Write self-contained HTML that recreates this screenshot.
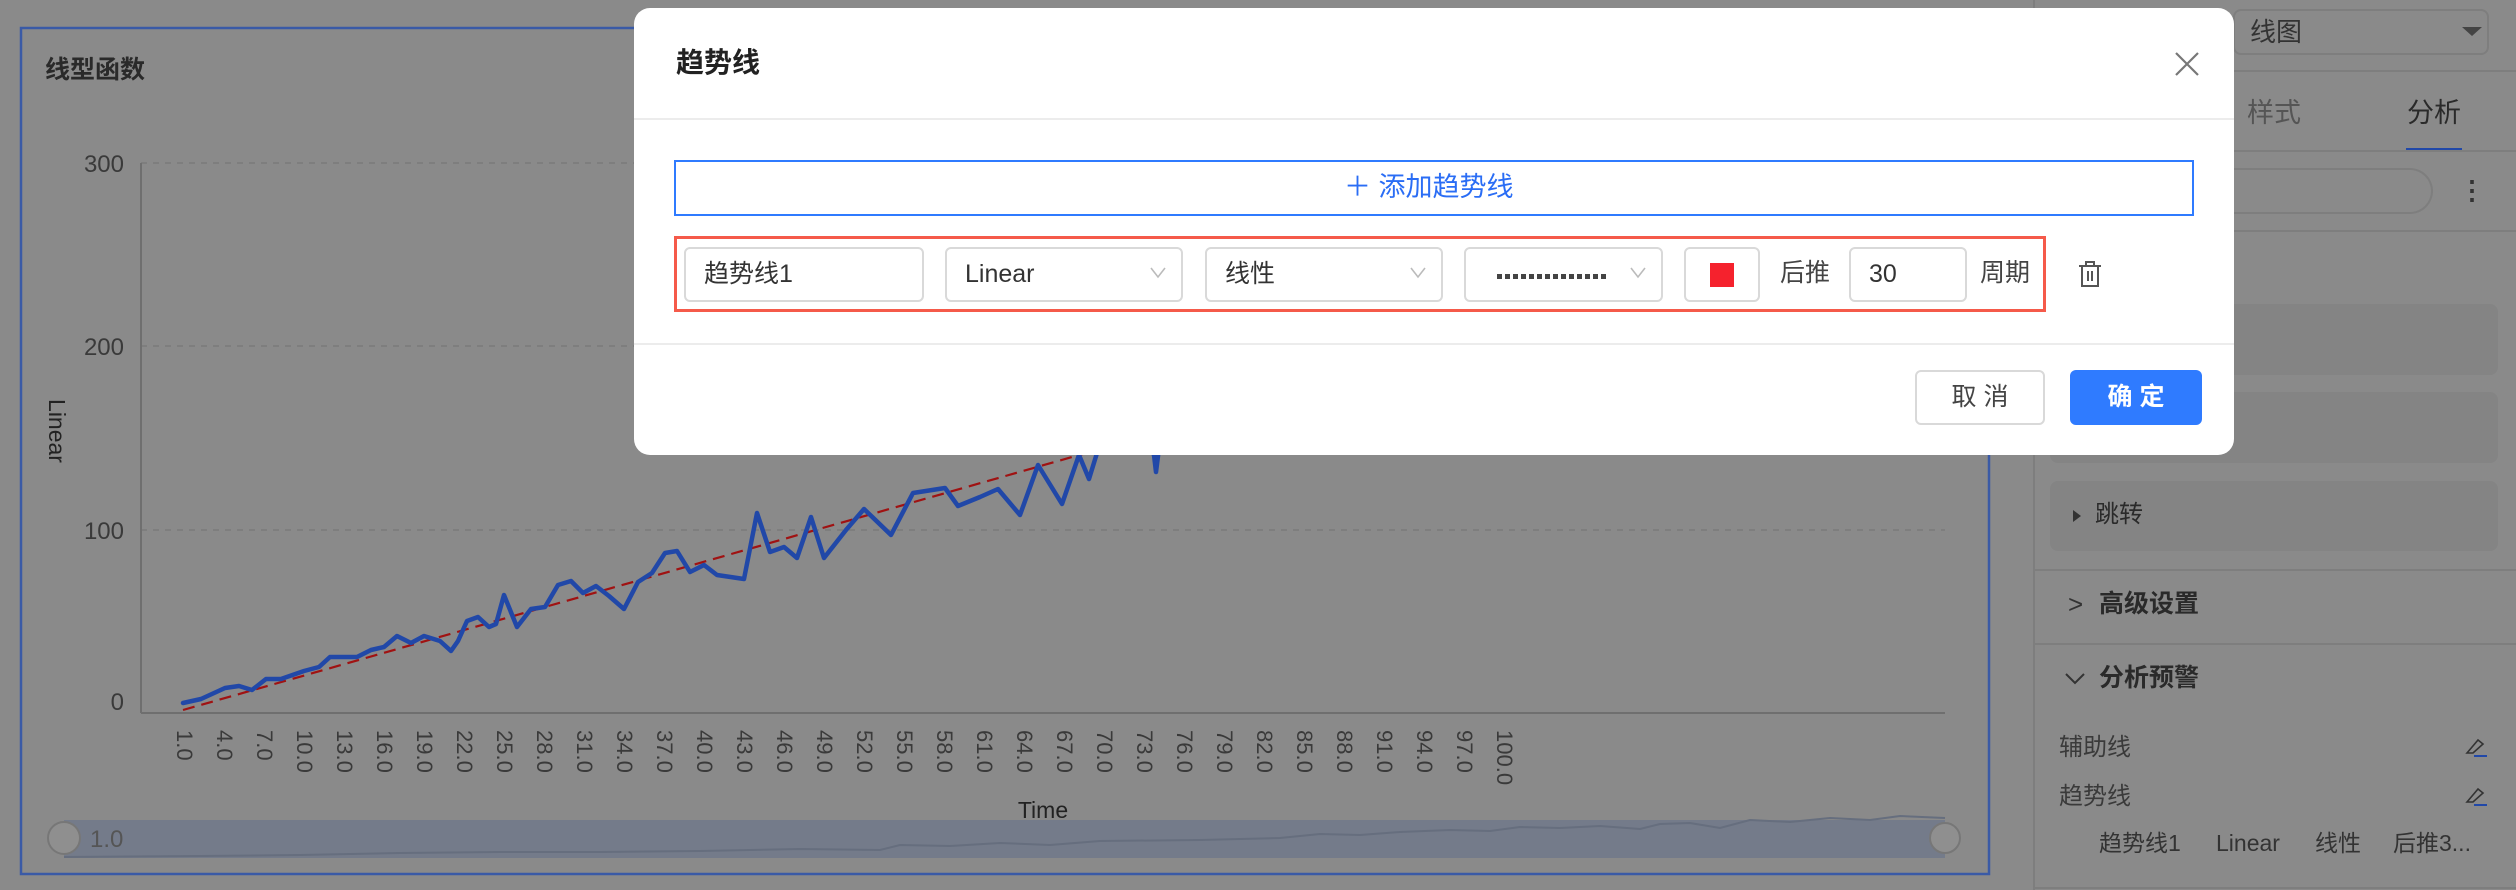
<!DOCTYPE html>
<html><head><meta charset="utf-8"><style>
*{margin:0;padding:0;box-sizing:border-box}
body{width:2516px;height:890px;overflow:hidden;background:#8a8a8a;font-family:"Liberation Sans","Noto Sans CJK SC",sans-serif;position:relative}
.a{position:absolute}
.t{position:absolute;white-space:nowrap;line-height:1}
.inp{position:absolute;top:247px;height:55px;border:2px solid #d9d9d9;border-radius:6px;background:#fff;font-size:25px;color:#333;padding-left:18px;line-height:51px}
.chev{position:absolute;right:14px;top:14px;width:18px;height:18px}
.blk{position:absolute;left:2050px;width:448px;background:#848484;border-radius:8px}
.hl{position:absolute;height:2px;background:#7e7e7e}
</style></head><body>

<!-- chart -->
<svg class="a" style="left:0;top:0" width="2516" height="890">
<rect x="21" y="28" width="1968" height="846" fill="none" stroke="#3a5aa6" stroke-width="2.5"/>
<text x="45" y="78" font-size="25" font-weight="bold" fill="#2a2a2a" font-family="Liberation Sans, Noto Sans CJK SC, sans-serif">线型函数</text>
<g stroke="#7a7a7a" stroke-width="1.5" stroke-dasharray="6,6">
<line x1="141" y1="163" x2="1945" y2="163"/><line x1="141" y1="346" x2="1945" y2="346"/><line x1="141" y1="530" x2="1945" y2="530"/>
</g>
<line x1="141" y1="163" x2="141" y2="713" stroke="#6f6f6f" stroke-width="2"/>
<line x1="141" y1="713" x2="1945" y2="713" stroke="#6f6f6f" stroke-width="2"/>
<g font-size="24" fill="#3a3a3a" text-anchor="end" font-family="Liberation Sans, sans-serif">
<text x="124" y="172">300</text><text x="124" y="355">200</text><text x="124" y="539">100</text><text x="124" y="710">0</text>
</g>
<text transform="translate(49,431) rotate(90)" font-size="23" fill="#222" text-anchor="middle" font-family="Liberation Sans, sans-serif">Linear</text>
<text x="1043" y="818" font-size="23" fill="#222" text-anchor="middle" font-family="Liberation Sans, sans-serif">Time</text>
<g font-size="22" fill="#3a3a3a" font-family="Liberation Sans, sans-serif" id="xl">
<text transform="translate(177,730) rotate(90)">1.0</text><text transform="translate(217,730) rotate(90)">4.0</text><text transform="translate(257,730) rotate(90)">7.0</text><text transform="translate(297,730) rotate(90)">10.0</text><text transform="translate(337,730) rotate(90)">13.0</text><text transform="translate(377,730) rotate(90)">16.0</text><text transform="translate(417,730) rotate(90)">19.0</text><text transform="translate(457,730) rotate(90)">22.0</text><text transform="translate(497,730) rotate(90)">25.0</text><text transform="translate(537,730) rotate(90)">28.0</text><text transform="translate(577,730) rotate(90)">31.0</text><text transform="translate(617,730) rotate(90)">34.0</text><text transform="translate(657,730) rotate(90)">37.0</text><text transform="translate(697,730) rotate(90)">40.0</text><text transform="translate(737,730) rotate(90)">43.0</text><text transform="translate(777,730) rotate(90)">46.0</text><text transform="translate(817,730) rotate(90)">49.0</text><text transform="translate(857,730) rotate(90)">52.0</text><text transform="translate(897,730) rotate(90)">55.0</text><text transform="translate(937,730) rotate(90)">58.0</text><text transform="translate(977,730) rotate(90)">61.0</text><text transform="translate(1017,730) rotate(90)">64.0</text><text transform="translate(1057,730) rotate(90)">67.0</text><text transform="translate(1097,730) rotate(90)">70.0</text><text transform="translate(1137,730) rotate(90)">73.0</text><text transform="translate(1177,730) rotate(90)">76.0</text><text transform="translate(1217,730) rotate(90)">79.0</text><text transform="translate(1257,730) rotate(90)">82.0</text><text transform="translate(1297,730) rotate(90)">85.0</text><text transform="translate(1337,730) rotate(90)">88.0</text><text transform="translate(1377,730) rotate(90)">91.0</text><text transform="translate(1417,730) rotate(90)">94.0</text><text transform="translate(1457,730) rotate(90)">97.0</text><text transform="translate(1497,730) rotate(90)">100.0</text>
</g>
<line x1="183" y1="710" x2="1160" y2="432" stroke="#a01212" stroke-width="2.2" stroke-dasharray="12,7"/>
<polyline fill="none" stroke="#2148a8" stroke-width="4.5" stroke-linejoin="round" stroke-linecap="round" points="183,703 201,699 225,688 239,686 252,690 266,679 281,679 304,671 319,667 330,657 357,657 371,650 384,647 397,636 411,643 424,636 440,641 451,651 458,641 467,621 478,617 489,627 496,624 504,595 517,627 531,609 545,607 558,585 571,581 583,593 596,586 609,596 624,609 638,582 652,573 665,553 677,551 690,572 704,565 717,575 744,579 757,513 770,552 784,547 797,558 811,517 824,558 846,530 864,509 891,535 913,493 945,488 958,506 980,497 998,489 1020,515 1038,465 1062,504 1079,455 1089,479 1101,440 1120,420 1140,430 1154,455 1156,472 1160,440"/>
<rect x="64" y="820" width="1881" height="38" fill="#747b8a"/>
<polyline fill="none" stroke="#666e7e" stroke-width="2" points="64,857 200,856 300,855 400,853 500,852 600,852 700,851 800,849 880,850 900,845 950,846 1000,843 1050,845 1100,841 1200,840 1280,838 1320,834 1360,835 1400,832 1450,830 1490,831 1520,827 1560,828 1600,826 1640,829 1660,824 1690,823 1720,828 1750,820 1790,822 1830,818 1870,820 1900,816 1945,818"/>
<circle cx="64" cy="838" r="16" fill="#8f8f8f" stroke="#777" stroke-width="2"/>
<circle cx="1945" cy="838" r="15" fill="#8f8f8f" stroke="#777" stroke-width="2"/>
<text x="90" y="847" font-size="24" fill="#555" font-family="Liberation Sans, sans-serif">1.0</text>
</svg>

<!-- right panel -->
<div class="a" style="left:2033px;top:0;width:2px;height:890px;background:#7e7e7e"></div>
<div class="a" style="left:2233px;top:9px;width:256px;height:46px;border:2px solid #7e7e7e;border-radius:8px"></div>
<div class="t" style="left:2250px;top:19px;font-size:26px;color:#333">线图</div>
<div class="a" style="left:2462px;top:27px;width:0;height:0;border-left:10px solid transparent;border-right:10px solid transparent;border-top:9px solid #444"></div>
<div class="hl" style="left:2035px;top:70px;width:481px"></div>
<div class="t" style="left:2247px;top:100px;font-size:27px;color:#555">样式</div>
<div class="t" style="left:2407px;top:100px;font-size:27px;color:#2a2a2a">分析</div>
<div class="a" style="left:2406px;top:148px;width:56px;height:3px;background:#2148a8"></div>
<div class="hl" style="left:2035px;top:150px;width:481px"></div>
<div class="a" style="left:2150px;top:168px;width:283px;height:46px;border:2px solid #7e7e7e;border-left:none;border-radius:0 23px 23px 0"></div>
<div class="t" style="left:2459px;top:177px;font-size:26px;color:#333;font-weight:bold">⋮</div>
<div class="hl" style="left:2035px;top:230px;width:481px"></div>
<div class="blk" style="top:304px;height:71px"></div>
<div class="blk" style="top:392px;height:71px"></div>
<div class="blk" style="top:481px;height:70px"></div>
<div class="a" style="left:2073px;top:510px;width:0;height:0;border-top:6px solid transparent;border-bottom:6px solid transparent;border-left:8px solid #333"></div>
<div class="t" style="left:2095px;top:503px;font-size:24px;color:#2a2a2a">跳转</div>
<div class="hl" style="left:2035px;top:569px;width:481px"></div>
<div class="t" style="left:2068px;top:591px;font-size:26px;color:#333">&gt;</div>
<div class="t" style="left:2099px;top:592px;font-size:25px;color:#2a2a2a;font-weight:bold">高级设置</div>
<div class="hl" style="left:2035px;top:643px;width:481px"></div>
<svg class="a" style="left:2064px;top:672px" width="22" height="14"><polyline points="2,2 11,11 20,2" fill="none" stroke="#333" stroke-width="2"/></svg>
<div class="t" style="left:2099px;top:666px;font-size:25px;color:#2a2a2a;font-weight:bold">分析预警</div>
<div class="t" style="left:2059px;top:736px;font-size:24px;color:#3a3a3a">辅助线</div>
<div class="t" style="left:2059px;top:785px;font-size:24px;color:#3a3a3a">趋势线</div>
<svg class="a" style="left:2464px;top:735px" width="24" height="24"><path d="M3 18 L14 5 L19 9 L9 18 Z" fill="none" stroke="#333" stroke-width="1.6"/><line x1="10" y1="21" x2="23" y2="21" stroke="#2148a8" stroke-width="2"/></svg>
<svg class="a" style="left:2464px;top:784px" width="24" height="24"><path d="M3 18 L14 5 L19 9 L9 18 Z" fill="none" stroke="#333" stroke-width="1.6"/><line x1="10" y1="21" x2="23" y2="21" stroke="#2148a8" stroke-width="2"/></svg>
<div class="t" style="left:2099px;top:832px;font-size:23px;color:#333">趋势线1</div>
<div class="t" style="left:2216px;top:832px;font-size:23px;color:#333">Linear</div>
<div class="t" style="left:2315px;top:832px;font-size:23px;color:#333">线性</div>
<div class="t" style="left:2393px;top:832px;font-size:23px;color:#333">后推3...</div>
<div class="hl" style="left:2035px;top:887px;width:481px"></div>

<!-- modal -->
<div class="a" style="left:634px;top:8px;width:1600px;height:447px;background:#fff;border-radius:16px">
</div>
<div class="t" style="left:676px;top:49px;font-size:28px;font-weight:bold;color:#222">趋势线</div>
<svg class="a" style="left:2174px;top:52px" width="26" height="24"><path d="M2 1 L24 23 M24 1 L2 23" stroke="#777" stroke-width="2.2"/></svg>
<div class="a" style="left:634px;top:118px;width:1600px;height:2px;background:#ececec"></div>
<div class="a" style="left:674px;top:160px;width:1520px;height:56px;border:2px solid #2f7bff"></div>
<div class="t" style="left:1344px;top:174px;font-size:27px;color:#2a6df5">＋ 添加趋势线</div>
<div class="a" style="left:674px;top:236px;width:1372px;height:76px;border:3px solid #f55a4a"></div>
<div class="inp" style="left:684px;width:240px">趋势线1</div>
<div class="inp" style="left:945px;width:238px">Linear<svg class="chev" viewBox="0 0 18 18"><polyline points="2,5 9,14 16,5" fill="none" stroke="#bbb" stroke-width="1.6"/></svg></div>
<div class="inp" style="left:1205px;width:238px">线性<svg class="chev" viewBox="0 0 18 18"><polyline points="2,5 9,14 16,5" fill="none" stroke="#bbb" stroke-width="1.6"/></svg></div>
<div class="inp" style="left:1464px;width:199px"><div class="a" style="left:31px;top:25px;width:111px;height:5px;background:repeating-linear-gradient(90deg,#444 0 5px,transparent 5px 8px)"></div><svg class="chev" viewBox="0 0 18 18"><polyline points="2,5 9,14 16,5" fill="none" stroke="#bbb" stroke-width="1.6"/></svg></div>
<div class="inp" style="left:1684px;width:76px;padding:0"><div class="a" style="left:24px;top:14px;width:24px;height:24px;background:#f5222d"></div></div>
<div class="t" style="left:1780px;top:261px;font-size:25px;color:#444">后推</div>
<div class="inp" style="left:1849px;width:118px">30</div>
<div class="t" style="left:1980px;top:261px;font-size:25px;color:#444">周期</div>
<svg class="a" style="left:2077px;top:259px" width="26" height="30"><path d="M2 7 H24 M9 7 V3 H17 V7 M5 7 V27 H21 V7 M11 12 V22 M15 12 V22" fill="none" stroke="#555" stroke-width="2"/></svg>
<div class="a" style="left:634px;top:343px;width:1600px;height:2px;background:#ececec"></div>
<div class="a" style="left:1915px;top:370px;width:130px;height:55px;border:2px solid #d9d9d9;border-radius:6px;font-size:25px;color:#444;text-align:center;line-height:51px">取 消</div>
<div class="a" style="left:2070px;top:370px;width:132px;height:55px;background:#2f7bff;border-radius:6px;font-size:25px;color:#fff;text-align:center;line-height:55px;font-weight:bold">确 定</div>
</body></html>
